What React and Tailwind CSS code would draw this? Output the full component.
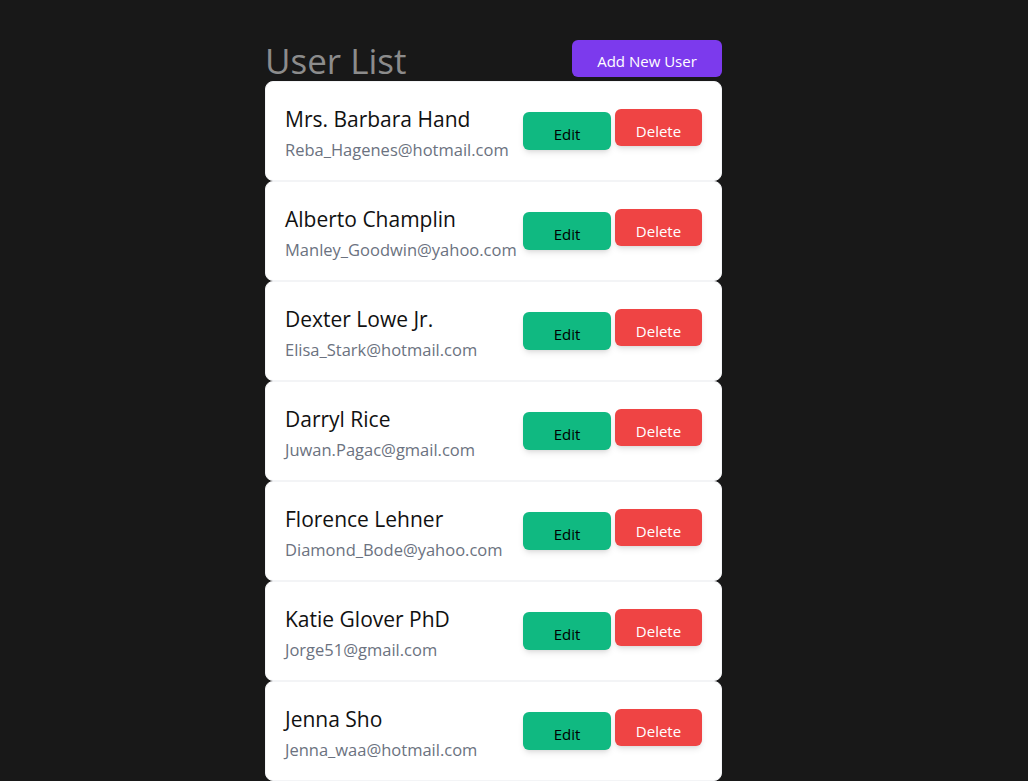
const users = [
  { name: 'Mrs. Barbara Hand', email: 'Reba_Hagenes@hotmail.com' },
  { name: 'Alberto Champlin', email: 'Manley_Goodwin@yahoo.com' },
  { name: 'Dexter Lowe Jr.', email: 'Elisa_Stark@hotmail.com' },
  { name: 'Darryl Rice', email: 'Juwan.Pagac@gmail.com' },
  { name: 'Florence Lehner', email: 'Diamond_Bode@yahoo.com' },
  { name: 'Katie Glover PhD', email: 'Jorge51@gmail.com' },
  { name: 'Jenna Sho', email: 'Jenna_waa@hotmail.com' },
]

function UserRow({ user }) {
  return (
    <div className="flex h-[100px] items-center justify-between rounded-lg border border-gray-100 bg-white px-[19px]">
      <div className="mt-1 flex flex-col">
        <span className="text-[21px] leading-[30px] text-[#111111]">{user.name}</span>
        <span className="mt-1 text-[16.5px] leading-6 text-[#6b7280]">{user.email}</span>
      </div>
      <div className="mb-1 flex shrink-0 items-start gap-1">
        <button className="mt-[3px] h-[38px] w-[88px] rounded-md bg-[#10b981] pt-2 text-[15px] text-black shadow-md">Edit</button>
        <button className="h-[37px] w-[87px] rounded-md bg-[#ef4444] pt-2 text-[15px] text-white shadow-md">Delete</button>
      </div>
    </div>
  )
}

export default function App() {
  return (
    <div className="min-h-[781px] bg-[#181818] font-['Open_Sans',sans-serif]">
      <div className="ml-[265px] w-[457px] pt-[40px]">
        <div className="flex items-start justify-between">
          <h1 className="text-[35px] leading-[41px] text-[#8c8c8c]">User List</h1>
          <button className="h-[37px] w-[150px] rounded-md bg-[#7c3aed] pt-1.5 text-[15px] text-white">Add New User</button>
        </div>
        <div className="flex flex-col">
          {users.map((user) => (
            <UserRow key={user.email} user={user} />
          ))}
        </div>
      </div>
    </div>
  )
}
